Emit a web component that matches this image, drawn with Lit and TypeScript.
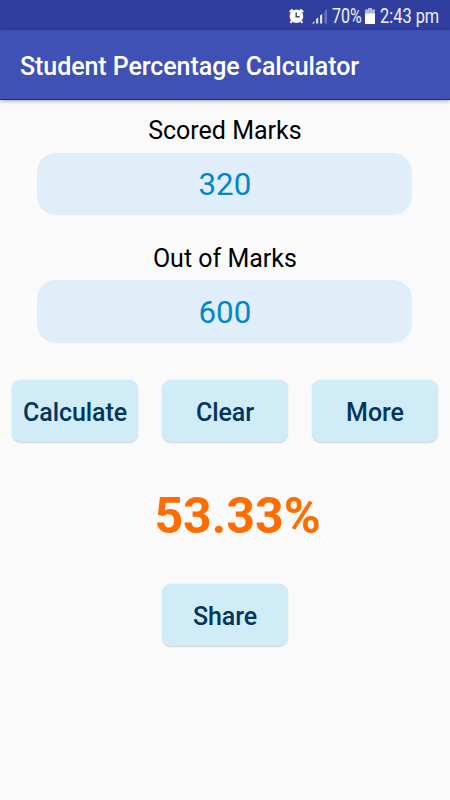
import { LitElement, html, css } from "lit";
import { customElement, state } from "lit/decorators.js";

@customElement("app-root")
export class AppRoot extends LitElement {
  static styles = css`
    :host {
      display: flex;
      flex-direction: column;
      height: 800px;
      overflow: hidden;
      background: #fafafa;
      font-family: Roboto, sans-serif;
      color: #000;
    }
    * { box-sizing: border-box; }
    .status {
      flex: none;
      height: 30px;
      padding: 2px 11px 0 0;
      background: #303f9f;
      color: #f0f1fa;
      display: flex;
      align-items: center;
      justify-content: flex-end;
      font-size: 19.5px;
      white-space: nowrap;
    }
    .status svg { flex: none; display: block; }
    .alarm { margin-right: 7px; }
    .signal { margin-right: 5px; }
    .battery { margin: 0 5px 0 4px; }
    .level, .clock { transform-origin: left center; }
    .level { width: 29px; transform: scaleX(0.82); }
    .clock { width: 59px; transform: scaleX(0.84); }
    .bar {
      flex: none;
      height: 70px;
      padding: 5px 20px 0;
      display: flex;
      align-items: center;
      background: #3f51b5;
      border-bottom: 1px solid #0c2ba4;
      box-shadow: 0 1px 4px rgba(0, 0, 0, 0.35);
      color: #fff;
    }
    h1 { margin: 0; font-size: 25px; font-weight: 500; line-height: 30px; letter-spacing: -0.07px; white-space: nowrap; }
    .field { display: flex; flex-direction: column; margin: 16px 37.6px 0 37.4px; }
    .field + .field { margin-top: 28.5px; }
    label { font-size: 25px; line-height: 30px; text-align: center; }
    input {
      width: 100%;
      height: 62.5px;
      margin: 6.5px 0 0;
      padding: 2px 0 0;
      border: 0;
      outline: 0;
      border-radius: 19px;
      background: #e0eef9;
      color: #0288c7;
      font: 400 31.25px Roboto, sans-serif;
      text-align: center;
    }
    .actions { display: grid; grid-template-columns: repeat(3, 126px); gap: 24px; margin: 37.5px 12px 0; }
    button {
      width: 126px;
      height: 62px;
      padding: 3px 0 0;
      border: 0;
      border-radius: 9px;
      background: #d0ecf7;
      color: #03365b;
      font: 500 25px Roboto, sans-serif;
      letter-spacing: -0.07px;
      box-shadow: 0 0.5px 1.5px rgba(0, 0, 0, 0.16);
    }
    .result {
      margin: 43.5px 0 0 25px;
      text-align: center;
      font-size: 50px;
      font-weight: 700;
      line-height: 60px;
      color: #ff6d00;
    }
    .share { align-self: center; margin-top: 38px; }
  `;

  @state() private scored = "320";
  @state() private total = "600";
  @state() private result = "53.33%";

  private calculate() {
    const total = Number(this.total);
    this.result = total ? `${((Number(this.scored) / total) * 100).toFixed(2)}%` : "";
  }

  private clear() {
    this.scored = "";
    this.total = "";
    this.result = "";
  }

  render() {
    return html`
      <div class="status">
        <svg class="alarm" width="17" height="16" viewBox="0 0 17 16">
          <path d="M1.6 4 4.6 1.4M12.2 1.4l3 2.6M4 12.8l-1.6 2M12.8 12.8l1.6 2" stroke="#fff" stroke-width="2" fill="none" />
          <circle cx="8.4" cy="8.2" r="6.8" fill="#fff" />
          <path d="M8.2 4.4v4.3h3.4" stroke="#303f9f" stroke-width="1.4" fill="none" />
        </svg>
        <svg class="signal" width="15" height="16" viewBox="0 0 15 16">
          <path d="M0 15.5 2.4 13v2.5zM4 15.5v-4.5l2.2-1.6v6.1zM8 15.5V7.7l2.2-2v9.8z" fill="#e4e7f7" />
          <path d="M12.5 15.5V3.3L15 1v14.5z" fill="#6b76bd" />
        </svg>
        <span class="level">70%</span>
        <svg class="battery" width="10" height="16" viewBox="0 0 10 16">
          <path d="M3 0h4v1.5h3V6H0V1.5h3z" fill="#aeb5dc" />
          <path d="M0 5.5h10V16H0z" fill="#fff" />
        </svg>
        <span class="clock">2:43 pm</span>
      </div>
      <header class="bar"><h1>Student Percentage Calculator</h1></header>
      <div class="field">
        <label for="scored">Scored Marks</label>
        <input id="scored" inputmode="decimal" .value=${this.scored}
          @input=${(e: Event) => (this.scored = (e.target as HTMLInputElement).value)} />
      </div>
      <div class="field">
        <label for="total">Out of Marks</label>
        <input id="total" inputmode="decimal" .value=${this.total}
          @input=${(e: Event) => (this.total = (e.target as HTMLInputElement).value)} />
      </div>
      <div class="actions">
        <button @click=${this.calculate}>Calculate</button>
        <button @click=${this.clear}>Clear</button>
        <button>More</button>
      </div>
      <div class="result">${this.result}</div>
      <button class="share">Share</button>
    `;
  }
}
